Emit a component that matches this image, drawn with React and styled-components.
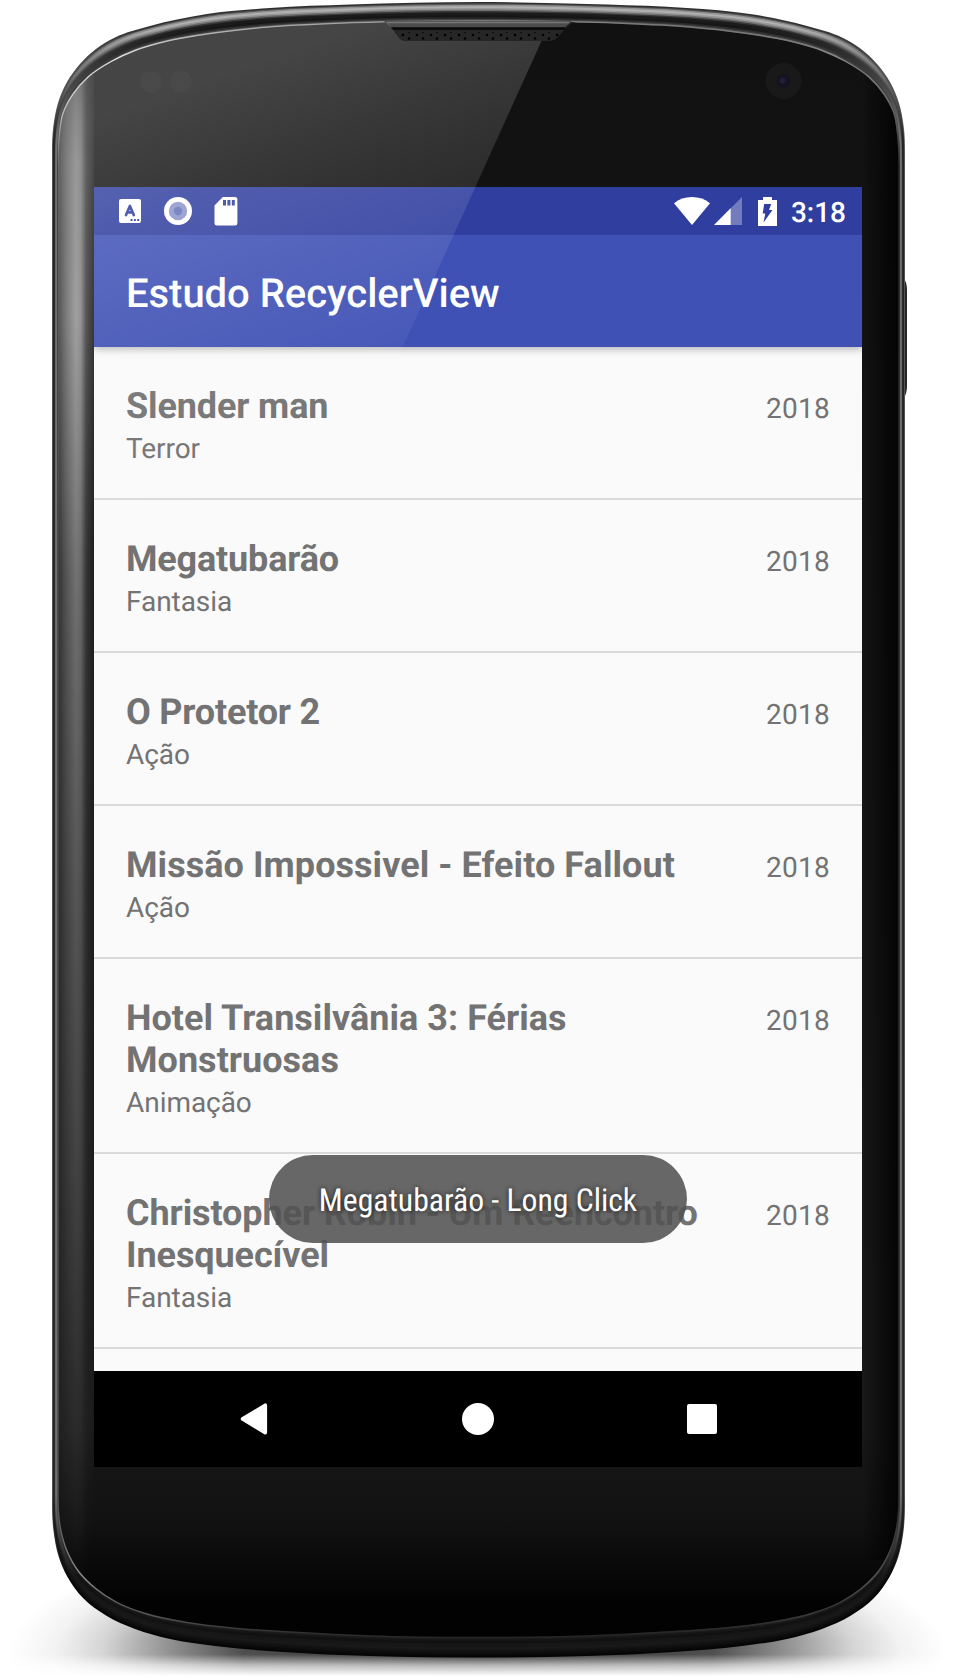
import React from "react";
import styled, { createGlobalStyle } from "styled-components";

const GlobalStyle = createGlobalStyle`
  html, body { margin: 0; padding: 0; background: #fff; }
  body {
    font-family: Roboto, "Liberation Sans", sans-serif;
    text-rendering: geometricPrecision;
    overflow: hidden;
  }
  * { box-sizing: border-box; }
`;

const Stage = styled.main`
  position: relative;
  width: 958px;
  height: 1678px;
  padding: 187px 96px 0 94px;
  overflow: hidden;
  background: #fff;
`;

const Drawing = styled.svg`
  position: absolute;
  inset: 0;
  z-index: ${(p) => p.$level || 0};
  width: 958px;
  height: 1678px;
  pointer-events: none;
`;

const Screen = styled.section`
  position: relative;
  display: flex;
  flex-direction: column;
  width: 768px;
  height: 1280px;
  background: #fafafa;
`;

const StatusBar = styled.header`
  display: flex;
  justify-content: space-between;
  height: 48px;
  padding: 0 16px 0 25px;
  background: #303f9f;
`;

const IconGroup = styled.div`
  display: flex;
  align-items: center;
`;

const Icon = styled.svg`
  display: block;
  flex: none;
  width: ${(p) => p.$w}px;
  height: ${(p) => p.$h}px;
  margin-right: ${(p) => p.$gap || 0}px;
`;

const Clock = styled.span`
  color: #fff;
  font-size: 28px;
  font-weight: 500;
  line-height: 48px;
  padding-top: 3px;
`;

const AppBar = styled.div`
  position: relative;
  z-index: 1;
  display: flex;
  align-items: center;
  height: 112px;
  padding: 5px 32px 0;
  background: #3f51b5;
  box-shadow: 0 2px 8px rgba(0, 0, 0, 0.3);
  clip-path: inset(0 0 -20px 0);
`;

const AppTitle = styled.h1`
  margin: 0;
  color: #fff;
  font-size: 40px;
  font-weight: 500;
  line-height: 48px;
  letter-spacing: -0.04px;
  white-space: nowrap;
`;

const MovieList = styled.ul`
  flex: 1;
  min-height: 0;
  margin: 0;
  padding: 0;
  list-style: none;
  overflow: hidden;
`;

const MovieRow = styled.li`
  display: flex;
  justify-content: space-between;
  padding: 38px 32px 0;
  height: ${(p) => (p.$tall ? 195 : 153)}px;
  border-bottom: 2px solid #dadada;
  color: #737373;
`;

const MovieInfo = styled.div`
  width: 600px;
`;

const MovieTitle = styled.h2`
  margin: 0 0 5px;
  font-size: 36px;
  font-weight: 700;
  line-height: 42px;
  letter-spacing: ${(p) => p.$tracking || 0}px;
`;

const Genre = styled.p`
  margin: 0;
  font-size: 28px;
  line-height: 33px;
  letter-spacing: -0.05px;
`;

const Year = styled.span`
  font-size: 28px;
  line-height: 33px;
  letter-spacing: 0.25px;
  padding-top: 7px;
`;

const Toast = styled.div`
  position: absolute;
  left: 175px;
  top: 968px;
  display: flex;
  align-items: center;
  justify-content: center;
  width: 418px;
  height: 88px;
  padding-top: 3px;
  border-radius: 44px;
  background: rgba(82, 82, 82, 0.88);
`;

const ToastText = styled.span`
  color: #fff;
  font-family: "Roboto Condensed", Roboto, sans-serif;
  font-size: 31.7px;
  line-height: 36px;
  white-space: nowrap;
  text-shadow: 0 0 5px rgba(0, 0, 0, 0.73);
`;

const NavBar = styled.nav`
  display: flex;
  justify-content: center;
  height: 96px;
  background: #000;
`;

const NavButton = styled.div`
  display: flex;
  align-items: center;
  justify-content: center;
  width: 224px;
`;

const movies = [
  { title: "Slender man", genre: "Terror", year: "2018", tracking: -0.13 },
  { title: "Megatubarão", genre: "Fantasia", year: "2018", tracking: -0.17 },
  { title: "O Protetor 2", genre: "Ação", year: "2018", tracking: -0.2 },
  { title: "Missão Impossivel - Efeito Fallout", genre: "Ação", year: "2018", tracking: 0.06 },
  { title: "Hotel Transilvânia 3: Férias Monstruosas", genre: "Animação", year: "2018", tracking: 0.03, tall: true },
  { title: "Christopher Robin - Um Reencontro Inesquecível", genre: "Fantasia", year: "2018", tracking: -0.09, tall: true },
];

/* Left half of the handset outline: [outer x, outer y, inner x, inner y], from top centre down. */
const PROFILE = [
  [478.5, 2, 478.5, 21], [350, 4.5, 340, 23], [270, 8, 267, 27], [207, 14, 213, 33],
  [150, 26, 167, 41], [115, 37.5, 136, 50], [96, 49, 112, 61], [80, 64, 88, 77],
  [67, 82, 73, 94], [58, 103, 63, 113], [53.2, 127, 59.2, 135], [52, 160, 58, 165],
  [52, 800, 58, 800],
  [52, 1500, 58, 1496], [53.5, 1531, 60, 1526], [58.5, 1556, 67, 1551], [67.5, 1577, 79, 1572],
  [83, 1598, 95, 1588], [106, 1615.5, 117, 1602.5], [135, 1629, 147, 1614], [170, 1639, 187, 1622.5],
  [215, 1646, 232, 1628], [283, 1652, 290, 1632], [370, 1656, 370, 1636], [478.5, 1657.5, 478.5, 1637.5],
];

function contour(t) {
  const left = PROFILE.map(([a, b, c, d]) => [a + (c - a) * t, b + (d - b) * t]);
  const right = left.slice(1, -1).reverse().map(([x, y]) => [957 - x, y]);
  const pts = left.concat(right);
  const n = pts.length;
  const f = (v) => v.toFixed(2);
  const dist = (a, b) => Math.hypot(b[0] - a[0], b[1] - a[1]) || 1;
  /* Tangent at p, weighted so that the shorter neighbouring span dominates. */
  const tangent = (a, p, b) => {
    const la = dist(a, p);
    const lb = dist(p, b);
    const x = ((p[0] - a[0]) / la) * lb + ((b[0] - p[0]) / lb) * la;
    const y = ((p[1] - a[1]) / la) * lb + ((b[1] - p[1]) / lb) * la;
    const l = Math.hypot(x, y) || 1;
    return [x / l, y / l];
  };
  let d = `M${f(pts[0][0])} ${f(pts[0][1])}`;
  for (let i = 0; i < n; i++) {
    const p0 = pts[(i - 1 + n) % n];
    const p1 = pts[i];
    const p2 = pts[(i + 1) % n];
    const p3 = pts[(i + 2) % n];
    const straight = Math.abs(p1[0] - p2[0]) < 0.01;
    const u = straight ? [0, Math.sign(p2[1] - p1[1])] : Math.abs(p0[0] - p1[0]) < 0.01 ? [0, Math.sign(p1[1] - p0[1])] : tangent(p0, p1, p2);
    const v = straight ? u : Math.abs(p2[0] - p3[0]) < 0.01 ? [0, Math.sign(p3[1] - p2[1])] : tangent(p1, p2, p3);
    const k = dist(p1, p2) / 3;
    d += `C${f(p1[0] + u[0] * k)} ${f(p1[1] + u[1] * k)} ${f(p2[0] - v[0] * k)} ${f(p2[1] - v[1] * k)} ${f(p2[0])} ${f(p2[1])}`;
  }
  return d + "Z";
}

/* Bezel bands: depth, then the colour at the top, the sides and the bottom. */
const BANDS = [
  [0, "#303030", "#777", "#050505"],
  [0.08, "#555", "#444", "#080808"],
  [0.14, "#929292", "#262626", "#0b0b0b"],
  [0.22, "#b0b0b0", "#222", "#101010"],
  [0.32, "#989898", "#222", "#141414"],
  [0.4, "#6d6d6d", "#2a2a2a", "#181818"],
  [0.48, "#383838", "#505050", "#181818"],
  [0.55, "#1b1b1b", "#707070", "#161616"],
  [0.7, "#161616", "#747474", "#111"],
  [0.82, "#2a2a2a", "#555", "#151515"],
  [0.9, "#444", "#333", "#1c1c1c"],
];

const FACE = contour(1);

function Handset() {
  return (
    <Drawing viewBox="0 0 958 1678">
      <defs>
        <radialGradient id="ground">
          <stop offset="0" stopColor="#000" stopOpacity="0.85" />
          <stop offset="0.5" stopColor="#000" stopOpacity="0.72" />
          <stop offset="0.65" stopColor="#000" stopOpacity="0.46" />
          <stop offset="0.8" stopColor="#000" stopOpacity="0.17" />
          <stop offset="0.9" stopColor="#000" stopOpacity="0.05" />
          <stop offset="1" stopColor="#000" stopOpacity="0" />
        </radialGradient>
        <linearGradient id="groundFade" gradientUnits="userSpaceOnUse" x1="0" x2="0" y1="1640" y2="1676">
          <stop offset="0" stopColor="#fff" />
          <stop offset="0.4" stopColor="#fff" stopOpacity="0.95" />
          <stop offset="0.7" stopColor="#fff" stopOpacity="0.35" />
          <stop offset="1" stopColor="#fff" stopOpacity="0" />
        </linearGradient>
        <mask id="groundMask" maskUnits="userSpaceOnUse" x="0" y="1400" width="958" height="278">
          <rect x="0" y="1400" width="958" height="278" fill="url(#groundFade)" />
        </mask>
        {BANDS.map(([t, top, side, bottom], i) => (
          <linearGradient key={t} id={`band${i}`} gradientUnits="userSpaceOnUse" x1="0" x2="0" y1="0" y2="1660">
            <stop offset="0.016" stopColor={top} />
            <stop offset="0.085" stopColor={side} />
            <stop offset="0.9" stopColor={side} />
            <stop offset="0.95" stopColor={bottom} />
          </linearGradient>
        ))}
        <linearGradient id="face" x1="0" x2="0" y1="0" y2="1">
          <stop offset="0" stopColor="#111" />
          <stop offset="0.87" stopColor="#191919" />
          <stop offset="0.93" stopColor="#111" />
          <stop offset="0.98" stopColor="#020202" />
        </linearGradient>
        <linearGradient id="rim" gradientUnits="userSpaceOnUse" x1="0" x2="0" y1="20" y2="1640">
          <stop offset="0" stopColor="#8a8a8a" />
          <stop offset="0.025" stopColor="#e0e0e0" />
          <stop offset="0.06" stopColor="#aaa" />
          <stop offset="0.09" stopColor="#444" />
          <stop offset="0.92" stopColor="#555" />
          <stop offset="0.96" stopColor="#8c8c8c" />
          <stop offset="0.985" stopColor="#555" />
          <stop offset="1" stopColor="#222" />
        </linearGradient>
        <linearGradient id="rimShade" gradientUnits="userSpaceOnUse" x1="480" x2="900" y1="0" y2="0">
          <stop offset="0" stopColor="#000" stopOpacity="0" />
          <stop offset="1" stopColor="#000" stopOpacity="0.45" />
        </linearGradient>
        <linearGradient id="edgeLight" gradientUnits="userSpaceOnUse" x1="59" x2="94" y1="0" y2="0">
          <stop offset="0" stopColor="#fff" stopOpacity="0.22" />
          <stop offset="0.2" stopColor="#fff" stopOpacity="0.42" />
          <stop offset="0.48" stopColor="#fff" stopOpacity="0.62" />
          <stop offset="0.62" stopColor="#fff" stopOpacity="0.56" />
          <stop offset="0.78" stopColor="#fff" stopOpacity="0.22" />
          <stop offset="1" stopColor="#fff" stopOpacity="0.06" />
        </linearGradient>
        <linearGradient id="edgeFade" gradientUnits="userSpaceOnUse" x1="0" x2="0" y1="70" y2="1600">
          <stop offset="0" stopColor="#fff" stopOpacity="0.45" />
          <stop offset="0.06" stopColor="#fff" stopOpacity="0.75" />
          <stop offset="0.16" stopColor="#fff" stopOpacity="0.88" />
          <stop offset="0.35" stopColor="#fff" stopOpacity="0.62" />
          <stop offset="0.53" stopColor="#fff" stopOpacity="0.45" />
          <stop offset="0.7" stopColor="#fff" stopOpacity="0.32" />
          <stop offset="0.82" stopColor="#fff" stopOpacity="0.2" />
          <stop offset="1" stopColor="#fff" stopOpacity="0" />
        </linearGradient>
        <mask id="edgeMask" maskUnits="userSpaceOnUse" x="50" y="60" width="60" height="1560" style={{ maskType: "alpha" }}>
          <rect x="50" y="60" width="60" height="1560" fill="url(#edgeFade)" />
        </mask>
        <linearGradient id="rightShade" gradientUnits="userSpaceOnUse" x1="862" x2="900" y1="0" y2="0">
          <stop offset="0" stopColor="#000" stopOpacity="0" />
          <stop offset="0.8" stopColor="#000" stopOpacity="0.7" />
          <stop offset="1" stopColor="#000" stopOpacity="0.8" />
        </linearGradient>
        <clipPath id="faceClip"><path d={FACE} /></clipPath>
        <pattern id="holes" width="14" height="7" patternUnits="userSpaceOnUse" x="400" y="33">
          <circle cx="3" cy="2" r="1.3" fill="#000" />
          <circle cx="9" cy="5.5" r="1.3" fill="#000" />
        </pattern>
      </defs>
      <ellipse cx="478" cy="1656" rx="470" ry="138" fill="url(#ground)" mask="url(#groundMask)" />
      <path d="M904 279c2 2 3 6 3 12v94c0 6-1 10-3 12z" fill="#262626" />
      {BANDS.map(([t], i) => <path key={t} d={contour(t)} fill={`url(#band${i})`} />)}
      <path d={FACE} fill="url(#face)" />
      <g clipPath="url(#faceClip)">
        <rect x="57" y="60" width="37" height="1560" fill="url(#edgeLight)" mask="url(#edgeMask)" />
        <rect x="862" y="60" width="40" height="1500" fill="url(#rightShade)" />
      </g>
      <path d={FACE} fill="none" stroke="url(#rim)" strokeWidth="1.4" />
      <path d={FACE} fill="none" stroke="url(#rimShade)" strokeWidth="1.6" />
      <path d="M380 22C389 22 390 26 394 31L399 38Q401 41 405 41H550Q554 41 557 38L565 29Q571 22 578 22Z" fill="#262626" />
      <path d="M384 21H572L564 28H392Z" fill="#4c4c4c" />
      <path d="M387 22.5H569" stroke="#777" strokeWidth="1.4" />
      <path d="M391 28.5H565" stroke="#080808" strokeWidth="2.4" />
      <path d="M395 32H562L556 40H402Z" fill="url(#holes)" />
      <circle cx="151" cy="82" r="11" fill="#fff" fillOpacity="0.022" />
      <circle cx="181" cy="82" r="11" fill="#fff" fillOpacity="0.022" />
      <circle cx="783.5" cy="81" r="18" fill="#191919" />
      <circle cx="783.5" cy="81" r="7" fill="#15131f" />
      <circle cx="782.5" cy="80.5" r="3" fill="#211d3b" />
    </Drawing>
  );
}

function Gloss() {
  return (
    <Drawing viewBox="0 0 958 1678" $level={2}>
      <defs>
        <linearGradient id="gloss" gradientUnits="userSpaceOnUse" x1="0" y1="150" x2="140" y2="551">
          <stop offset="0" stopColor="#fff" stopOpacity="0.22" />
          <stop offset="0.25" stopColor="#fff" stopOpacity="0.155" />
          <stop offset="0.75" stopColor="#fff" stopOpacity="0.045" />
          <stop offset="1" stopColor="#fff" stopOpacity="0" />
        </linearGradient>
        <clipPath id="glossClip">
          <path d={FACE} />
        </clipPath>
      </defs>
      <path
        d="M50 20H380C389 22 390 26 394 31L399 38Q401 41 405 41H541.5L270 640H50Z"
        fill="url(#gloss)"
        clipPath="url(#glossClip)"
      />
    </Drawing>
  );
}

export default function App() {
  return (
    <>
      <GlobalStyle />
      <Stage>
        <Handset />
        <Screen>
          <StatusBar>
            <IconGroup>
              <Icon $w={22} $h={24} $gap={23} viewBox="0 0 22 24">
                <rect width="22" height="24" rx="2" fill="#fff" />
                <path d="M7 16L10.9 7L14.8 16M8.6 13.4H13.2" fill="none" stroke="#303f9f" strokeWidth="2.7" strokeLinecap="round" strokeLinejoin="round" />
                <path d="M11.5 20h2v2h-2zM14.9 20h2v2h-2zM18.2 20h2v2h-2z" fill="#303f9f" />
              </Icon>
              <Icon $w={28} $h={28} $gap={22} viewBox="0 0 28 28">
                <circle cx="14" cy="14" r="14" fill="#fff" />
                <circle cx="14" cy="14" r="9.2" fill="#8b95cb" />
                <circle cx="14" cy="14" r="4.2" fill="#6672b8" />
              </Icon>
              <Icon $w={24} $h={30} viewBox="0 0 24 30">
                <path d="M8.8 1H20.8Q23.4 1 23.4 3.5V27Q23.4 29.5 21 29.5H3Q.5 29.5 .5 27V9.5Z" fill="#fff" />
                <path d="M9 4h3v5.5h-3zM13.4 4h3v5.5h-3zM17.8 4h3v5.5h-3z" fill="#303f9f" />
              </Icon>
            </IconGroup>
            <IconGroup>
              <Icon $w={36} $h={28} $gap={4} viewBox="0 0 36 28">
                <path d="M0 6.2C5 2 11 0 18 0S31 2 36 6.2L18 28Z" fill="#fff" />
              </Icon>
              <Icon $w={28} $h={28} $gap={16} viewBox="0 0 28 28">
                <path d="M28 0V28H0Z" fill="#fff" fillOpacity="0.32" />
                <path d="M16.7 11.3V28H0Z" fill="#fff" />
              </Icon>
              <Icon $w={19} $h={30} $gap={14} viewBox="0 0 19 30">
                <path d="M5 1H14V4H19V30H0V4H5Z" fill="#fff" />
                <path d="M6.2 8H13.2L11 14H14.5L5.5 26.5L7.3 17.5H4.7Z" fill="#303f9f" />
              </Icon>
              <Clock>3:18</Clock>
            </IconGroup>
          </StatusBar>
          <AppBar>
            <AppTitle>Estudo RecyclerView</AppTitle>
          </AppBar>
          <MovieList>
            {movies.map((m) => (
              <MovieRow key={m.title} $tall={m.tall}>
                <MovieInfo>
                  <MovieTitle $tracking={m.tracking}>{m.title}</MovieTitle>
                  <Genre>{m.genre}</Genre>
                </MovieInfo>
                <Year>{m.year}</Year>
              </MovieRow>
            ))}
          </MovieList>
          <NavBar>
            <NavButton>
              <Icon $w={28} $h={34} viewBox="0 0 28 34">
                <path d="M26 2.5V31.5L2 17Z" fill="#fff" stroke="#fff" strokeWidth="4" strokeLinejoin="round" transform="translate(.8 1) scale(.94)" />
              </Icon>
            </NavButton>
            <NavButton>
              <Icon $w={32} $h={32} viewBox="0 0 32 32">
                <circle cx="16" cy="16" r="16" fill="#fff" />
              </Icon>
            </NavButton>
            <NavButton>
              <Icon $w={30} $h={30} viewBox="0 0 30 30">
                <rect width="30" height="30" rx="2" fill="#fff" />
              </Icon>
            </NavButton>
          </NavBar>
          <Toast>
            <ToastText>Megatubarão - Long Click</ToastText>
          </Toast>
        </Screen>
        <Gloss />
      </Stage>
    </>
  );
}
